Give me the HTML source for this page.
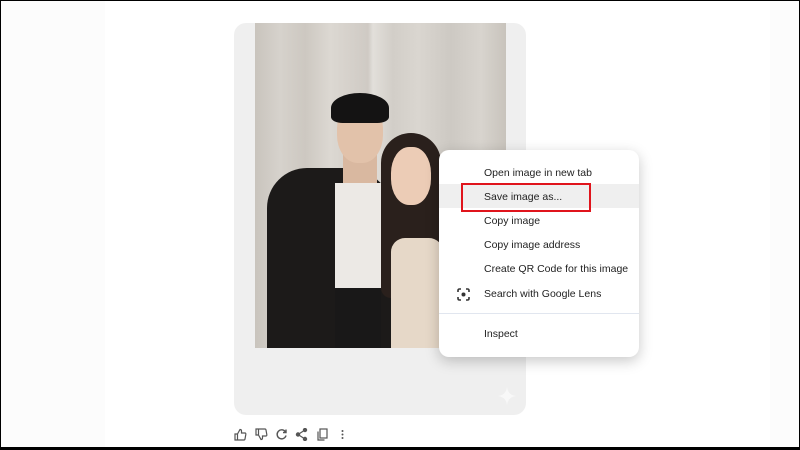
<!DOCTYPE html>
<html><head><style>
body{margin:0;width:800px;height:450px;overflow:hidden;background:#fff;font-family:"Liberation Sans",sans-serif;position:relative}
.a{position:absolute}
.side{top:0;bottom:0;background:#fcfcfc}
.card{left:234px;top:23px;width:292px;height:392px;background:#efefef;border-radius:12px}
.photo{left:255px;top:23px;width:251px;height:325px;overflow:hidden;background:linear-gradient(90deg,#c9c4bd 0%,#d6d2cc 10%,#cdc8c1 20%,#dcd8d2 30%,#cfcac4 45%,#e2dfda 47%,#d2cec8 55%,#dad6d0 65%,#cdc9c3 78%,#d8d4ce 90%,#c8c3bc 100%)}
.menu{left:439px;top:150px;width:200px;height:207px;background:#fff;border-radius:10px;box-shadow:0 4px 14px rgba(0,0,0,.22)}
.it{position:absolute;left:45px;font-size:10.5px;color:#222;line-height:14px}
.ic svg{position:absolute;top:428px}
</style></head><body>
<div class="a side" style="left:0;width:105px"></div>
<div class="a side" style="left:770px;width:30px"></div>
<div class="a card"></div>
<svg class="a" style="left:497px;top:386px" width="20" height="20" viewBox="0 0 20 20"><path d="M10 1 Q11 9 19 10 Q11 11 10 19 Q9 11 1 10 Q9 9 10 1Z" fill="#f8f8f8"/></svg>
<div class="a photo">
 <div class="a" style="left:12px;top:145px;width:128px;height:185px;background:#1c1a19;border-radius:40px 50px 0 0"></div>
 <div class="a" style="left:80px;top:160px;width:46px;height:170px;background:#ece9e5"></div>
 <div class="a" style="left:80px;top:265px;width:46px;height:65px;background:#191818"></div>
 <div class="a" style="left:88px;top:115px;width:34px;height:45px;background:#d9b8a0"></div>
 <div class="a" style="left:82px;top:78px;width:46px;height:62px;background:#e2c2aa;border-radius:45%"></div>
 <div class="a" style="left:76px;top:70px;width:58px;height:30px;background:#141313;border-radius:50% 50% 20% 20%"></div>
 <div class="a" style="left:126px;top:110px;width:60px;height:165px;background:#2a201c;border-radius:30px 30px 10px 10px"></div>
 <div class="a" style="left:136px;top:215px;width:52px;height:110px;background:#e6d8c8;border-radius:14px 14px 0 0"></div>
 <div class="a" style="left:136px;top:124px;width:40px;height:58px;background:#ecccb6;border-radius:45%"></div>
</div>
<div class="a menu">
 <div class="a" style="left:0;top:34px;width:200px;height:24px;background:#efefef"></div>
 <div class="a" style="left:0;top:163px;width:200px;height:1px;background:#e1e6ef"></div>
 <div class="it" style="top:16px">Open image in new tab</div>
 <div class="it" style="top:40px">Save image as...</div>
 <div class="it" style="top:64px">Copy image</div>
 <div class="it" style="top:88px">Copy image address</div>
 <div class="it" style="top:112px">Create QR Code for this image</div>
 <div class="it" style="top:137px">Search with Google Lens</div>
 <div class="it" style="top:177px">Inspect</div>
 <svg class="a" style="left:18px;top:138px" width="13" height="13" viewBox="0 0 13 13" fill="none" stroke="#333" stroke-width="1.6"><path d="M1 4V2.5Q1 1 2.5 1H4M9 1h1.5Q12 1 12 2.5V4M12 9v1.5Q12 12 10.5 12H9M4 12H2.5Q1 12 1 10.5V9"/><circle cx="6.5" cy="6.5" r="2" fill="#333" stroke="none"/></svg>
</div>
<div class="a" style="left:461px;top:183px;width:126px;height:25px;border:2px solid #e0141c"></div>
<div class="ic">
<svg style="left:234px" width="13" height="13" viewBox="0 0 13 13" fill="none" stroke="#555" stroke-width="1.2"><path d="M1 6h2.5v6H1zM3.5 6L6 1.5Q7.5 1.5 7.5 3V5H11Q12 5 11.8 6.5L11 11Q10.8 12 10 12H3.5"/></svg>
<svg style="left:255px" width="13" height="13" viewBox="0 0 13 13" fill="none" stroke="#555" stroke-width="1.2"><path d="M1 1h2.5v6H1zM3.5 7L6 11.5Q7.5 11.5 7.5 10V8H11Q12 8 11.8 6.5L11 2Q10.8 1 10 1H3.5"/></svg>
<svg style="left:275px" width="13" height="13" viewBox="0 0 13 13" fill="none" stroke="#555" stroke-width="1.4"><path d="M10.5 4A4.5 4.5 0 1 0 11 7.5M11 1.5V4.5H8"/></svg>
<svg style="left:295px" width="13" height="13" viewBox="0 0 13 13" fill="#555" stroke="#555" stroke-width="1.2"><path d="M10 2L3 6.5L10 11" fill="none"/><circle cx="10" cy="2" r="1.6"/><circle cx="3" cy="6.5" r="1.6"/><circle cx="10" cy="11" r="1.6"/></svg>
<svg style="left:316px" width="13" height="13" viewBox="0 0 13 13" fill="none" stroke="#555" stroke-width="1.2"><rect x="4" y="1" width="7" height="9"/><path d="M2 3.5V12H8.5"/></svg>
<svg style="left:336px" width="13" height="13" viewBox="0 0 13 13" fill="#555"><circle cx="6.5" cy="3" r="1"/><circle cx="6.5" cy="6.5" r="1"/><circle cx="6.5" cy="10" r="1"/></svg>
</div>
<div class="a" style="left:0;top:0;width:798px;height:446px;border:1px solid #000;border-bottom:3px solid #000"></div>
</body></html>
